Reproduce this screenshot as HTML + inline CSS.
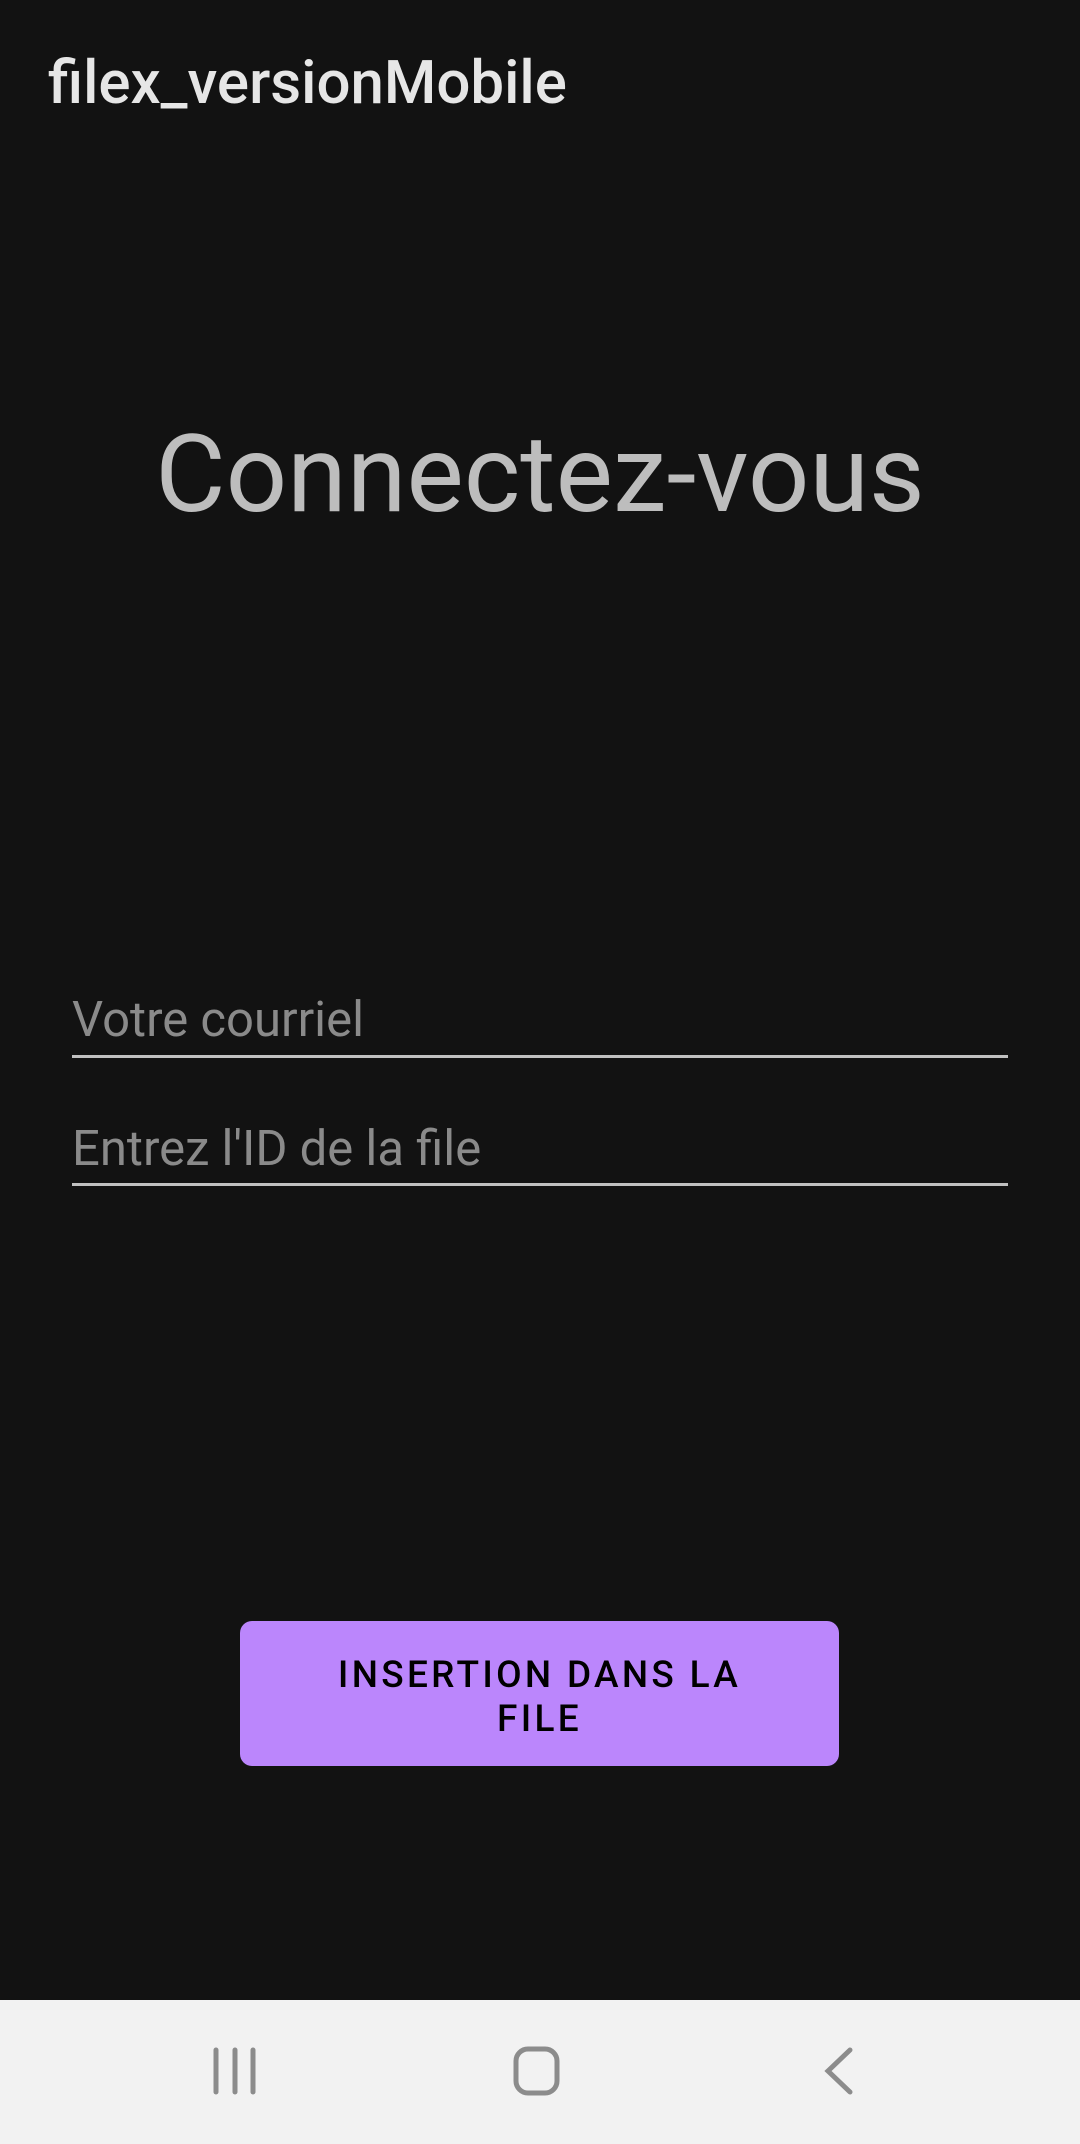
<!DOCTYPE html>
<html><head><meta charset="utf-8"><style>
html,body{margin:0;padding:0}
body{width:1080px;height:2144px;background:#121212;position:relative;overflow:hidden;font-family:"Roboto","Liberation Sans",sans-serif}
.t{position:absolute;white-space:nowrap}
#title{left:48px;top:47px;font-size:60px;font-weight:500;color:#e6e6e6;}
#h{left:0;width:1080px;text-align:center;top:412px;font-size:108px;color:#bdbdbd;}
.in{left:72px;font-size:49px;color:#8a8a8a;}
.ln{position:absolute;left:72px;width:936px;height:3px;background:#c0c0c0}
#btn{position:absolute;left:240px;top:1621px;width:599px;height:145px;background:#bb86fc;border-radius:12px;color:#000;text-align:center;font-size:37px;font-weight:500;letter-spacing:3.3px;line-height:44px;box-sizing:border-box;padding-top:33px}
#nav{position:absolute;left:0;top:2000px;width:1080px;height:144px;background:#f2f2f2}
</style></head><body>
<div class="t" id="title">filex_versionMobile</div>
<div class="t" id="h">Connectez-vous</div>
<div class="t in" style="top:991px">Votre courriel</div>
<div class="ln" style="top:1055px"></div>
<div class="t in" style="top:1120px">Entrez l'ID de la file</div>
<div class="ln" style="top:1183px"></div>
<div id="btn">INSERTION DANS LA<br>FILE</div>
<div id="nav">
<svg width="1080" height="144" style="position:absolute;left:0;top:0">
<g stroke="#8c8c8c" stroke-width="5" fill="none" stroke-linecap="round">
<line x1="216" y1="50" x2="216" y2="92"/><line x1="235" y1="50" x2="235" y2="92"/><line x1="253" y1="50" x2="253" y2="92"/>
<rect x="516" y="49" width="41" height="44" rx="12"/>
<polyline points="850,50 828,71 850,92"/>
</g></svg>
</div>
</body></html>
